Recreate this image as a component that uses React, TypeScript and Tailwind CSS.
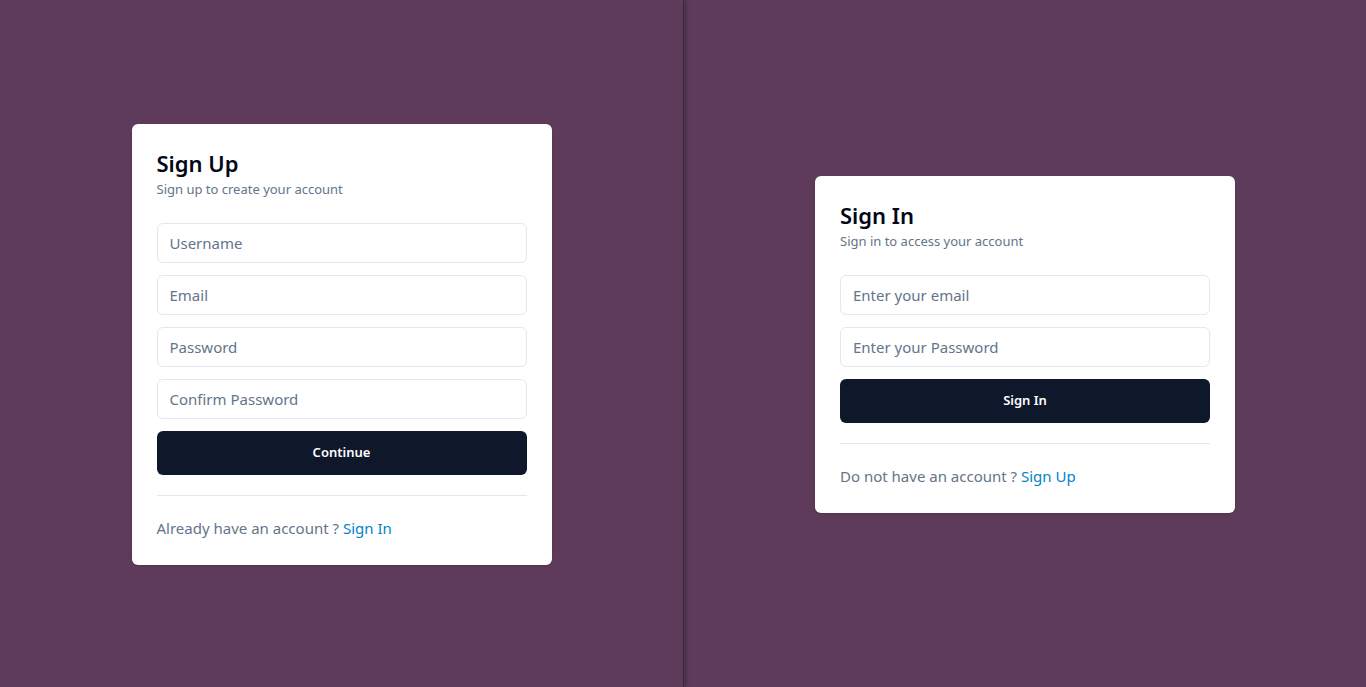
import { useState } from "react";

function Field({ placeholder, type = "text" }: { placeholder: string; type?: string }) {
  const [value, setValue] = useState("");
  return (
    <input
      type={type}
      value={value}
      onChange={(e) => setValue(e.target.value)}
      placeholder={placeholder}
      className="h-10 w-full rounded-md border border-[#e2e8f0] bg-white px-3 text-[15px] text-slate-900 placeholder:text-[#64748b] focus:outline-none"
    />
  );
}

function AuthCard({
  title,
  subtitle,
  fields,
  button,
  footer,
  link,
}: {
  title: string;
  subtitle: string;
  fields: { placeholder: string; type?: string }[];
  button: string;
  footer: string;
  link: string;
}) {
  return (
    <div className="w-[420px] rounded-md bg-white px-[25px] pt-[25px] pb-[25px] shadow-sm">
      <h2 className="mb-1 text-[22px] leading-7 font-semibold text-[#020817]">{title}</h2>
      <p className="text-[13px] leading-4 text-[#64748b]">{subtitle}</p>
      <form className="mt-[26px] flex flex-col gap-3" onSubmit={(e) => e.preventDefault()}>
        {fields.map((f) => (
          <Field key={f.placeholder} placeholder={f.placeholder} type={f.type} />
        ))}
        <button
          type="submit"
          className="h-11 w-full rounded-md bg-[#0f172a] text-[13px] font-semibold text-white"
        >
          {button}
        </button>
      </form>
      <hr className="mt-5 border-t border-[#e2e8f0]" />
      <p className="mt-5 text-[15px] leading-6 text-[#64748b]">
        {footer} <a href="#" className="text-[#0284c7]">{link}</a>
      </p>
    </div>
  );
}

export default function App() {
  return (
    <div
      className="flex h-[687px] w-full bg-[#5e3b5a]"
      style={{ fontFamily: '"Noto Sans", "Open Sans", sans-serif' }}
    >
      <div className="flex h-full w-[684px] items-center justify-center border-r border-[#3e2a3d] pt-0.5 shadow-[2px_0_4px_rgba(0,0,0,0.25)]">
        <AuthCard
          title="Sign Up"
          subtitle="Sign up to create your account"
          fields={[
            { placeholder: "Username" },
            { placeholder: "Email", type: "email" },
            { placeholder: "Password", type: "password" },
            { placeholder: "Confirm Password", type: "password" },
          ]}
          button="Continue"
          footer="Already have an account ?"
          link="Sign In"
        />
      </div>
      <div className="flex h-full flex-1 items-center justify-center pt-0.5">
        <AuthCard
          title="Sign In"
          subtitle="Sign in to access your account"
          fields={[
            { placeholder: "Enter your email", type: "email" },
            { placeholder: "Enter your Password", type: "password" },
          ]}
          button="Sign In"
          footer="Do not have an account ?"
          link="Sign Up"
        />
      </div>
    </div>
  );
}
